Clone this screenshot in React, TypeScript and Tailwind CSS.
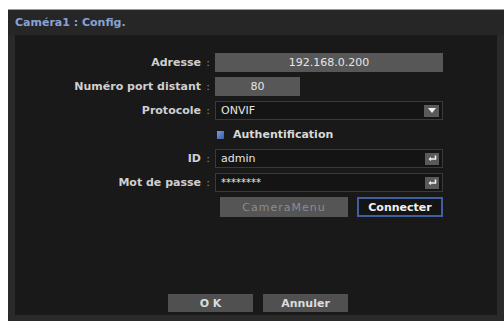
import React from "react";

const font = "font-['DejaVu_Sans',sans-serif]";

function Label({ text }: { text: string }) {
  return (
    <>
      <span className="w-[186px] shrink-0 text-right font-bold text-[#cfcfcf]">{text}</span>
      <span className="w-[14px] shrink-0 text-center text-[#8a8a8a]">:</span>
    </>
  );
}

function EnterKey() {
  return (
    <span className="flex h-[12px] w-[14px] items-center justify-center bg-[#5a5a5a]">
      <svg width="9" height="7" viewBox="0 0 9 7">
        <path d="M7.5 0.5 V4 H2" stroke="#f0f0f0" strokeWidth="1.6" fill="none" />
        <path d="M0.5 4 L3 1.8 L3 6.2 Z" fill="#f0f0f0" />
      </svg>
    </span>
  );
}

export default function App() {
  return (
    <div className={`flex h-[321px] w-[504px] bg-white pl-[8px] pt-[9px] ${font} text-[11px] leading-none`}>
      <div className="flex flex-1 flex-col border-t border-[#9a9a9a] bg-[#2a2a2a]">
        <div className="flex h-[25px] items-center bg-[#262626] pl-[7px] font-bold text-[#88a2d6]">
          Caméra1 : Config.
        </div>
        <div className="mb-[6px] mr-[7px] ml-[7px] flex flex-1 flex-col gap-[5px] bg-[#191919] pt-[18px]">
          <div className="flex h-[19px] items-center">
            <Label text="Adresse" />
            <div className="flex h-full w-[228px] items-center justify-center bg-[#575757] text-[#e6e6e6]">
              192.168.0.200
            </div>
          </div>
          <div className="flex h-[19px] items-center">
            <Label text="Numéro port distant" />
            <div className="flex h-full w-[85px] items-center justify-center bg-[#575757] text-[#e6e6e6]">
              80
            </div>
          </div>
          <div className="flex h-[19px] items-center">
            <Label text="Protocole" />
            <div className="flex h-full w-[228px] items-center justify-between border border-[#3a3a3a] bg-[#141414] pl-[5px] pr-[3px] text-[#e6e6e6]">
              ONVIF
              <span className="flex h-[12px] w-[15px] items-center justify-center bg-[#5a5a5a]">
                <svg width="8" height="5" viewBox="0 0 8 5">
                  <path d="M0 0 H8 L4 5 Z" fill="#f0f0f0" />
                </svg>
              </span>
            </div>
          </div>
          <div className="flex h-[19px] items-center pl-[202px]">
            <span className="h-[8px] w-[7px] bg-gradient-to-br from-[#7c9be0] to-[#3a5ba8]" />
            <span className="ml-[9px] font-bold text-[#d8d8d8]">Authentification</span>
          </div>
          <div className="flex h-[19px] items-center">
            <Label text="ID" />
            <div className="flex h-full w-[228px] items-center justify-between border border-[#3a3a3a] bg-[#141414] pl-[5px] pr-[3px] text-[#e6e6e6]">
              admin
              <EnterKey />
            </div>
          </div>
          <div className="flex h-[19px] items-center">
            <Label text="Mot de passe" />
            <div className="flex h-full w-[228px] items-center justify-between border border-[#3a3a3a] bg-[#141414] pl-[5px] pr-[3px] text-[10px] text-[#e6e6e6]">
              ********
              <EnterKey />
            </div>
          </div>
          <div className="flex h-[20px] items-stretch gap-[9px] pl-[205px]">
            <div className="flex w-[128px] items-center justify-center bg-[#555555] tracking-[1px] text-[#8c8c8c]">
              CameraMenu
            </div>
            <div className="flex w-[86px] items-center justify-center border-2 border-[#3f5f9f] bg-[#141414] font-bold text-[#f0f0f0]">
              Connecter
            </div>
          </div>
          <div className="flex-1" />
          <div className="mb-[3px] flex h-[18px] gap-[10px] pl-[153px]">
            <div className="flex w-[85px] items-center justify-center bg-[#505050] font-bold text-[#dcdcdc]">
              O K
            </div>
            <div className="flex w-[85px] items-center justify-center bg-[#505050] font-bold text-[#dcdcdc]">
              Annuler
            </div>
          </div>
        </div>
      </div>
    </div>
  );
}
